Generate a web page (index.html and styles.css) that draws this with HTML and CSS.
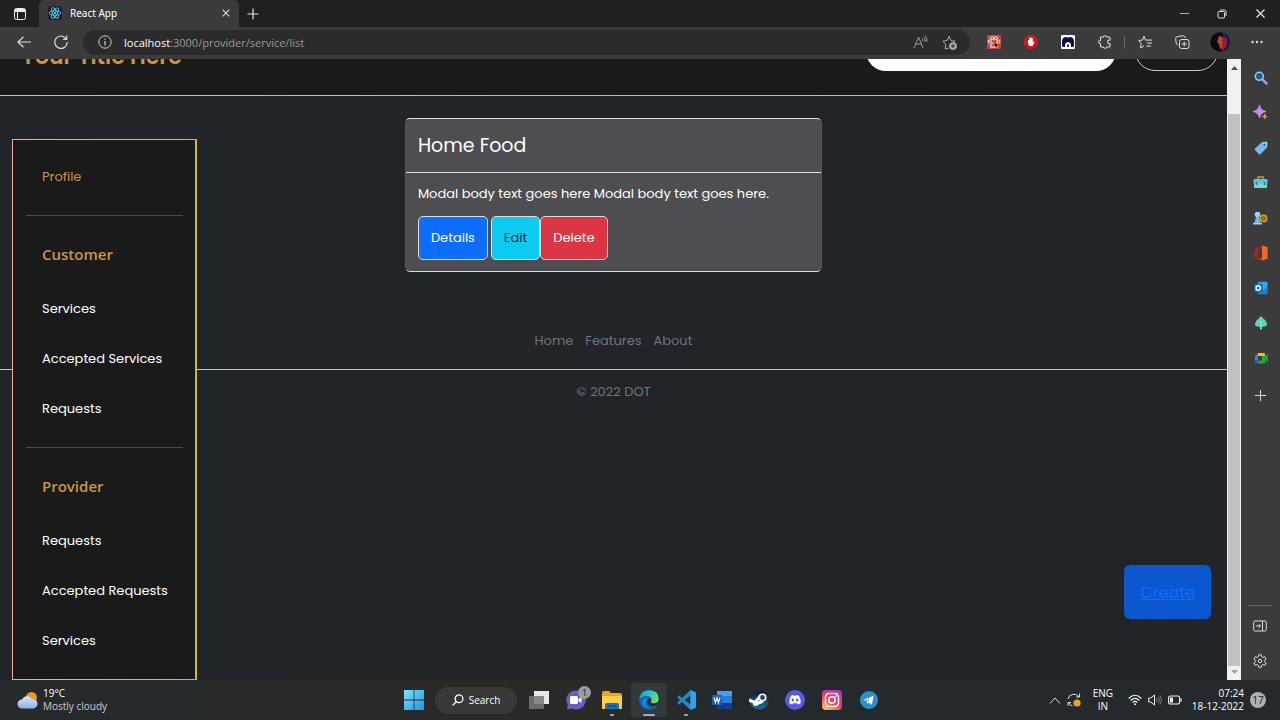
FILE: index.html
```html
<!DOCTYPE html>
<html lang="en">
<head>
<meta charset="utf-8">
<title>React App</title>
<link rel="stylesheet" href="styles.css">
</head>
<body>
<div class="desktop">
  <div class="tabbar">
    <button class="tab-menu" aria-label="Tab actions"><svg width="14" height="14" viewBox="0 0 14 14" fill="none" stroke="#eee"><rect x="1.500" y="1.500" width="11" height="11" rx="2"/><path d="M2 3.500h10" stroke-width="3"/><path d="M4.500 5v7.500"/></svg></button>
    <div class="tab">
      <svg width="14" height="14" viewBox="0 0 14 14"><rect width="14" height="14" rx="2" fill="#20232a"/><g fill="none" stroke="#58c4dc" stroke-width=".9"><ellipse cx="7" cy="7" rx="5.800" ry="2.300"/><ellipse cx="7" cy="7" rx="5.800" ry="2.300" transform="rotate(60 7 7)"/><ellipse cx="7" cy="7" rx="5.800" ry="2.300" transform="rotate(120 7 7)"/></g><circle cx="7" cy="7" r="1.200" fill="#58c4dc"/></svg>
      <span class="tab-title">React App</span>
      <button class="tab-close" aria-label="Close tab"><svg width="8" height="8" viewBox="0 0 8 8"><path d="M.7.7l6.600 6.600M7.300.7L.7 7.300" stroke="#ddd" stroke-width="1.100"/></svg></button>
    </div>
    <button class="new-tab" aria-label="New tab"><svg width="12" height="12" viewBox="0 0 12 12"><path d="M6 .5v11M.5 6h11" stroke="#ddd" stroke-width="1.200"/></svg></button>
    <div class="window-controls">
      <button aria-label="Minimise"><svg width="9" height="9" viewBox="0 0 9 9"><path d="M0 4.500h9" stroke="#aaa"/></svg></button>
      <button aria-label="Restore"><svg width="10" height="10" viewBox="0 0 10 10" fill="none" stroke="#ddd"><rect x="1" y="2.500" width="6.500" height="6.500" rx="1"/><path d="M3 1h4.500A1.500 1.500 0 0 1 9 2.500V7"/></svg></button>
      <button aria-label="Close"><svg width="9" height="9" viewBox="0 0 9 9"><path d="M.5.5l8 8M8.500.5l-8 8" stroke="#eee" stroke-width="1.100"/></svg></button>
    </div>
  </div>

  <div class="toolbar">
    <button class="tool" aria-label="Back"><svg width="14" height="12" viewBox="0 0 14 12" fill="none" stroke="#ddd" stroke-width="1.200"><path d="M6.500.7L1 6l5.500 5.300M1 6h13"/></svg></button>
    <button class="tool" aria-label="Refresh"><svg width="14" height="14" viewBox="0 0 14 14" fill="none" stroke="#ddd" stroke-width="1.200"><path d="M12.300 4A6.200 6.200 0 1 0 13.200 7M12.700.5V4.300H9"/></svg></button>
    <div class="address">
      <svg width="14" height="14" viewBox="0 0 14 14" fill="none" stroke="#ccc"><circle cx="7" cy="7" r="6.200"/><path d="M7 6v4.500M7 3.500v1.300" stroke-width="1.200"/></svg>
      <div class="url"><span class="host">localhost</span>:3000/provider/service/list</div>
      <button class="mini" aria-label="Read aloud"><svg width="15" height="14" viewBox="0 0 15 14" fill="none" stroke="#999"><path d="M1 13L5.500 2 10 13M2.600 9h5.800M9 3.500q1 1 .8 3M10.600 2q2.300 2 1.400 5M12 .7q2.800 2.300 1.800 6"/></svg></button>
      <button class="mini" aria-label="Add to favourites"><svg width="16" height="15" viewBox="0 0 16 15" fill="none" stroke="#aaa"><path d="M7 13l-3.800 1 .6-4.500L1 6.200l4.200-.8L7 1.300l1.900 4.100 4.200.8-1 1"/><circle cx="11" cy="11" r="3.500" fill="#aaa"/><path d="M11 9v4M9 11h4" stroke="#2b2b2b"/></svg></button>
    </div>
    <button class="tool ext" aria-label="Paw extension"><svg width="14" height="14" viewBox="0 0 14 14"><rect width="14" height="14" rx="1" fill="#c5493c"/><g fill="#c5493c" stroke="#f7d9d3" stroke-width="1.100"><circle cx="2.800" cy="6.500" r="1.500"/><circle cx="5.200" cy="3.200" r="1.500"/><circle cx="9" cy="3.200" r="1.500"/><circle cx="11.400" cy="6.500" r="1.500"/><path d="M3.500 11.500q0-2 2-3.200 1.500-1 3 0 2 1.200 2 3.200-1.500 1.500-3.500.3-2 1.200-3.500-.3z"/></g><path d="M7 7l4 3-2 3z" fill="#222"/></svg></button>
    <button class="tool ext" aria-label="Ad blocker"><svg width="14" height="14" viewBox="0 0 14 14"><path d="M4.200 0h5.600L14 4.200v5.600L9.800 14H4.200L0 9.800V4.200z" fill="#cc1620"/><path d="M4 7.500V5q.8-.8 1 .2V3.300q.6-.9 1.200 0V2.600q.7-.8 1.300 0v.7q.7-.8 1.200 0v4l1-.8q1-.2.600.8L8.500 11H5.500Q4 9.500 4 7.500z" fill="#fff"/></svg></button>
    <button class="tool ext" aria-label="Octotree extension"><svg width="14" height="14" viewBox="0 0 14 14"><rect width="14" height="14" rx="1" fill="#fff"/><path d="M1.500 12q-.8-2-.5-5Q1.200 2 5 2l1.300.6h1.400L9 2q3.800 0 4 5 .3 3-.5 5H10V9.500Q9.500 7 7 7T4 9.500V12z" fill="#0a1045"/><path d="M6.200 9.500h1.600V12H6.200z" fill="#0a1045"/></svg></button>
    <button class="tool ext" aria-label="Extensions"><svg width="14" height="14" viewBox="0 0 14 14" fill="none" stroke="#ddd" stroke-width="1.100"><path d="M3 2h2.300Q5.500.7 7 .7T8.700 2H11q1 0 1 1v2q-2.300-.3-2.300 1.800T12 8.800V11q0 1-1 1H8.700Q8.500 13.300 7 13.300T5.300 12H3.500q-1 0-1-1V8.700Q.7 8.500.7 7t1.800-1.700V3z"/></svg></button>
    <span class="tool-divider"></span>
    <button class="tool ext" aria-label="Favourites"><svg width="15" height="14" viewBox="0 0 15 14" fill="none" stroke="#ddd"><path d="M6 10.800L2.500 13l.8-4.300L.8 5.500l3.700-.4L6 1.200l1.500 3.900H14M9 8h5M8.500 11H13"/></svg></button>
    <button class="tool ext" aria-label="Collections"><svg width="15" height="14" viewBox="0 0 15 14" fill="none" stroke="#ddd"><rect x="4.500" y="4.500" width="9.500" height="9" rx="2"/><path d="M9.200 6.500v5M6.700 9h5M3 10.500Q1 9 1 7L.7 3.500q0-1.500 1.500-1.800l6-1Q10 .7 10.300 3"/></svg></button>
    <button class="tool ext" aria-label="Profile"><svg width="20" height="20" viewBox="0 0 20 20"><defs><clipPath id="face"><circle cx="10" cy="10" r="9.700"/></clipPath></defs><g clip-path="url(#face)"><rect width="20" height="20" fill="#080a12"/><path d="M13 1q6 3 6 12l-6 6z" fill="#26246a"/><path d="M9 4q5 0 5 6t-4 7l-1-5-2-2z" fill="#b44a2c"/><path d="M12 8l4-2q2 5-1 10l-3 3z" fill="#a01c28"/></g></svg></button>
    <button class="tool ext" aria-label="Settings and more"><svg width="12" height="4" viewBox="0 0 12 4" fill="#ddd"><circle cx="1.500" cy="2" r="1.200"/><circle cx="6" cy="2" r="1.200"/><circle cx="10.500" cy="2" r="1.200"/></svg></button>
  </div>

  <div class="browser-body">
    <div class="page">
      <header class="site-header">
        <a class="brand" href="#">Your Title Here</a>
        <input class="search" type="search" aria-label="Search">
        <button class="login" aria-label="Login"></button>
      </header>
      <nav class="side" aria-label="Sections">
        <a class="profile" href="#">Profile</a>
        <hr>
        <h2>Customer</h2>
        <a href="#">Services</a>
        <a href="#">Accepted Services</a>
        <a href="#">Requests</a>
        <hr>
        <h2>Provider</h2>
        <a href="#">Requests</a>
        <a href="#">Accepted Requests</a>
        <a href="#">Services</a>
      </nav>
      <main class="content">
        <article class="card">
          <h1>Home Food</h1>
          <div class="card-body">
            <p>Modal body text goes here Modal body text goes here.</p>
            <div class="actions">
              <button class="btn details">Details</button>
              <div class="pair"><button class="btn edit">Edit</button><button class="btn delete">Delete</button></div>
            </div>
          </div>
        </article>
      </main>
      <footer class="site-footer">
        <nav class="foot-links"><a href="#">Home</a><a href="#">Features</a><a href="#">About</a></nav>
        <p>© 2022 DOT</p>
      </footer>
      <a class="create" href="#">Create</a>
    </div>
    <div class="scrollbar">
      <svg width="7" height="5" viewBox="0 0 7 5"><path d="M0 5l3.500-4L7 5z" fill="#505050"/></svg>
      <div class="track"><div class="thumb"></div></div>
      <svg width="7" height="5" viewBox="0 0 7 5"><path d="M0 0l3.500 4L7 0z" fill="#a0a0a0"/></svg>
    </div>
    <aside class="edge-bar">
      <button aria-label="Search"><svg width="14" height="14" viewBox="0 0 14 14"><path d="M8.500 8.500l4 4" stroke="#a98fe0" stroke-width="2.500" stroke-linecap="round"/><circle cx="5.300" cy="5.300" r="4" fill="#245a8c" stroke="#8fc7ff" stroke-width="1.600"/></svg></button>
      <button aria-label="Discover"><svg width="15" height="15" viewBox="0 0 15 15"><path d="M6.500 0Q7.500 5.500 13 6.500 7.500 7.500 6.500 13 5.500 7.500 0 6.500 5.500 5.500 6.500 0z" fill="#bd8cf0" stroke="#bd8cf0"/><path d="M11.700 9v5M9.200 11.500h5" stroke="#d9a53b" stroke-width="1.400"/></svg></button>
      <button aria-label="Shopping"><svg width="14" height="14" viewBox="0 0 14 14"><path d="M7.500 1.500L12 .8q1.200 0 1.300 1.200L13 6.500l-6.500 6.700q-.8.500-1.500 0L1 9q-.5-.8 0-1.500z" fill="#78b7f5"/><path d="M7.500 1.500L12 .8q1.200 0 1.300 1.200L13 6z" fill="#8de0dc"/><circle cx="10.500" cy="3.700" r="1.100" fill="#285a7a"/></svg></button>
      <button aria-label="Tools"><svg width="15" height="13" viewBox="0 0 15 13"><path d="M5 3V1h5v2" fill="none" stroke="#caa23a" stroke-width="1.400"/><rect x=".5" y="3" width="14" height="5" rx="1" fill="#68b9e8"/><path d="M1 7.500h13V11q0 1-1 1H2q-1 0-1-1z" fill="#6fd8c4"/><path d="M3.500 6v3M11.500 6v3" stroke="#1f7288" stroke-width="1.300"/></svg></button>
      <button aria-label="Games"><svg width="15" height="14" viewBox="0 0 15 14"><circle cx="4.500" cy="3.500" r="2.800" fill="#9ad4ff"/><path d="M3 6h3l1 4 1 3H.5L2 10z" fill="#78b7f5"/><circle cx="10.500" cy="7.500" r="4" fill="#d39b26"/><circle cx="10.500" cy="7.500" r="1.600" fill="none" stroke="#6a4813" stroke-width="1.100"/><path d="M0 12h9v1.500H0z" fill="#9ad4ff"/></svg></button>
      <button aria-label="Office"><svg width="14" height="16" viewBox="0 0 14 16"><path d="M8 .5l5.500 1.800v11.400L8 15.500l-6.500-3 6.500.8V3L4 4v7L.7 12.500v-8z" fill="#d63b18"/><path d="M8 .5l5.500 1.800v11.400L8 15.500z" fill="#f0682a"/><path d="M8 .5L.7 4v8.500L4 11V4l4-1z" fill="#b32020"/></svg></button>
      <button aria-label="Outlook"><svg width="14" height="14" viewBox="0 0 14 14"><rect x="4" y=".7" width="9.500" height="8" rx="1" fill="#36a7ea"/><path d="M4 6l4.700 3L13.500 6v6.500q0 .8-.8.8H4.800q-.8 0-.8-.8z" fill="#1c82d4"/><rect x="0" y="2.700" width="8.500" height="8.500" rx="1" fill="#0f6abf"/><circle cx="4.200" cy="7" r="2.200" fill="none" stroke="#fff" stroke-width="1.400"/></svg></button>
      <button aria-label="E-tree"><svg width="14" height="14" viewBox="0 0 14 14"><path d="M6 8h2v5.500H6z" fill="#a9b9c8"/><path d="M7 .5q2 0 2.500 2.500 2.500.5 2.500 3 1.700 1.500.8 3.300Q12 11 7 11T1.200 9.300Q.3 7.500 2 6q0-2.500 2.500-3Q5 .5 7 .5z" fill="#5fd0b5"/><path d="M7 5v5" stroke="#a9e8d6"/></svg></button>
      <button aria-label="Meet"><svg width="14" height="12" viewBox="0 0 14 12"><path d="M4 1h6q1 0 1 1v2H4z" fill="#fbbc04"/><path d="M4 1v3H1z" fill="#ea4335"/><path d="M1 4h3v4.500H1z" fill="#2684fc"/><path d="M1 8.500h3v3H2q-1 0-1-1z" fill="#1e5fd0"/><path d="M4 8.500h4V4h3v6.500q0 1-1 1H4zM11 4.500L13.700 2v8.500L11 8z" fill="#20a64a"/></svg></button>
      <button class="edge-add" aria-label="Add"><svg width="11" height="11" viewBox="0 0 11 11"><path d="M5.500 0v11M0 5.500h11" stroke="#ddd"/></svg></button>
      <div class="edge-bottom">
        <button aria-label="Hide sidebar"><svg width="14" height="12" viewBox="0 0 14 12" fill="none" stroke="#ddd"><rect x=".7" y="1" width="12.600" height="10" rx="1.500"/><path d="M9.500 1v10M3 6h4.500M5.700 4.200L7.500 6 5.700 7.800"/></svg></button>
        <button aria-label="Settings"><svg width="14" height="14" viewBox="0 0 14 14" fill="none" stroke="#ddd"><path d="M5.700.8h2.600l.4 1.900 1.200.7 1.900-.6 1.300 2.200-1.500 1.300v1.400l1.500 1.300-1.300 2.200-1.900-.6-1.200.7-.4 1.900H5.700l-.4-1.900-1.200-.7-1.900.6L.9 9l1.500-1.300V6.300L.9 5l1.300-2.200 1.900.6 1.200-.7z"/><circle cx="7" cy="7" r="1.700"/></svg></button>
      </div>
    </aside>
  </div>

  <div class="taskbar">
    <div class="weather">
      <svg width="21" height="18" viewBox="0 0 21 18"><defs><linearGradient id="cloud" x2="0" y2="1"><stop stop-color="#dbe6fa"/><stop offset="1" stop-color="#8fb0ea"/></linearGradient></defs><circle cx="14.500" cy="6.500" r="5.500" fill="#f0952c"/><path d="M5 17.500a4.500 4.500 0 0 1 0-9 5.500 5.500 0 0 1 10-.3 4.700 4.700 0 0 1 1.500 9.300z" fill="url(#cloud)"/></svg>
      <div><div>19°C</div><div class="muted">Mostly cloudy</div></div>
    </div>
    <div class="apps">
      <button class="start" aria-label="Start"><svg width="20" height="20" viewBox="0 0 20 20"><defs><linearGradient id="win" x2="1" y2="1"><stop stop-color="#7fe0ff"/><stop offset="1" stop-color="#1c96e4"/></linearGradient></defs><path d="M0 0h9.600v9.600H0zM10.400 0H20v9.600h-9.600zM0 10.400h9.600V20H0zM10.400 10.400H20V20h-9.600z" fill="url(#win)"/></svg></button>
      <button class="task-search"><svg width="12" height="12" viewBox="0 0 12 12" fill="none" stroke="#fff" stroke-width="1.300"><circle cx="7" cy="4.800" r="3.900"/><path d="M4.200 7.700L.7 11.300"/></svg>Search</button>
      <div class="pins">
        <button aria-label="Task view"><svg width="20" height="18" viewBox="0 0 20 18"><rect x="5" y="0" width="15" height="13" fill="#e8e8e8"/><rect x="0" y="5" width="15" height="13" fill="#777" fill-opacity=".85"/></svg></button>
        <button aria-label="Chat"><svg width="20" height="20" viewBox="0 0 20 20"><path d="M10 .5a9.500 9.500 0 1 1-4 18L.8 19.500l1-4.500A9.500 9.500 0 0 1 10 .5z" fill="#6660b8"/><rect x="4" y="6" width="8" height="8" rx="1.500" fill="#fff"/><path d="M12.500 9l3-2v6l-3-2z" fill="#fff"/></svg><span class="count">1</span></button>
        <button class="running" aria-label="Files"><svg width="20" height="18" viewBox="0 0 20 18"><path d="M0 2q0-2 2-2h5l2 2h9q2 0 2 2v13H0z" fill="#e5a51d"/><path d="M0 5h20v12q0 1-1 1H1q-1 0-1-1z" fill="#fbcf4b"/><path d="M3 18v-4q0-2 2-2h10q2 0 2 2v4z" fill="#1672b8"/><path d="M6 15h8" stroke="#0c4d83" stroke-width="1.500"/></svg></button>
        <button class="running active" aria-label="Edge"><svg width="20" height="20" viewBox="0 0 20 20"><defs><linearGradient id="edge1" x2="1" y2=".3"><stop stop-color="#1598e0"/><stop offset=".6" stop-color="#30c6c0"/><stop offset="1" stop-color="#70dc55"/></linearGradient></defs><circle cx="10" cy="10" r="9.800" fill="#0d66ba"/><path d="M.3 9.500Q1 .2 10 .2t9.700 8.300q0 5-5.200 5-3.800 0-2.500-2 1.400-2.200-.6-4.200Q9 5 5.500 6 1.500 7 .3 9.500z" fill="url(#edge1)"/><path d="M8 9q-4 7 3 9.500Q2 18 4 11q1-3 5-3.500z" fill="#1a8bdc"/><path d="M9 9q-2.500 4 1 6.500 4 2.400 8-.7l1-.8q1.300-2 1-4l-1 2q-2 1.500-4.500 1.500-3.800 0-2.500-2Q12.500 10 11.500 8z" fill="#252a2e"/></svg></button>
        <button class="running" aria-label="VS Code"><svg width="20" height="20" viewBox="0 0 20 20"><path d="M14.500 0L20 2.400v15.200L14.500 20 1 7.200 3 5.500l11.500 9V5.500L3 14.500 1 12.800z" fill="#2489ca"/><path d="M14.500 0L20 2.400v15.200L14.500 20z" fill="#2ba3ec"/></svg></button>
        <button aria-label="Word"><svg width="20" height="18" viewBox="0 0 20 18"><rect x="5" y="0" width="15" height="18" rx="1" fill="#2b7cd3"/><path d="M5 0h15v5H5z" fill="#41a5ee"/><path d="M5 12h15v5q0 1-1 1H6q-1 0-1-1z" fill="#103f91"/><rect y="4" width="10" height="10" rx="1" fill="#185abd"/><path d="M2 6.500l1.500 5L5 7l1.500 4.500 1.500-5" fill="none" stroke="#fff" stroke-width="1.200"/></svg></button>
        <button aria-label="Steam"><svg width="20" height="20" viewBox="0 0 20 20"><defs><linearGradient id="steam" x2="0" y2="1"><stop stop-color="#101b35"/><stop offset="1" stop-color="#1b6c9d"/></linearGradient></defs><circle cx="10" cy="10" r="9.500" fill="url(#steam)"/><path d="M0 10l6 2.500 5-6M7 14l7-3" fill="none" stroke="#fff" stroke-width="3"/><circle cx="6.500" cy="13.500" r="2.500" fill="#fff"/><circle cx="13.500" cy="7.500" r="3.200" fill="#26435f" stroke="#fff" stroke-width="1.600"/></svg></button>
        <button aria-label="Discord"><svg width="20" height="20" viewBox="0 0 20 20"><circle cx="10" cy="10" r="10" fill="#5559e3"/><path d="M6 5.700q1-.6 2.500-.7l.4.800h2.200l.4-.8q1.500.1 2.500.7 2 3.300 1.800 7.300-1.300 1.200-3 1.500l-.8-1.300H8l-.8 1.300q-1.700-.3-3-1.500Q4 9 6 5.700z" fill="#fff"/><ellipse cx="7.800" cy="10" rx="1.200" ry="1.400" fill="#5559e3"/><ellipse cx="12.200" cy="10" rx="1.200" ry="1.400" fill="#5559e3"/></svg></button>
        <button aria-label="Instagram"><svg width="20" height="20" viewBox="0 0 20 20"><defs><linearGradient id="insta" x1=".2" y1="1" x2=".8" y2="0"><stop stop-color="#fdc04f"/><stop offset=".45" stop-color="#ee3f62"/><stop offset="1" stop-color="#a436c0"/></linearGradient></defs><rect width="20" height="20" rx="4" fill="url(#insta)"/><g fill="none" stroke="#fff" stroke-width="1.500"><rect x="3.500" y="3.500" width="13" height="13" rx="3.500"/><circle cx="10" cy="10" r="3.200"/></g><circle cx="13.800" cy="6.200" r=".9" fill="#fff"/></svg></button>
        <button aria-label="Telegram"><svg width="18" height="18" viewBox="0 0 18 18"><circle cx="9" cy="9" r="9" fill="#2994cb"/><path d="M3.500 9l10-4.200-1.600 9-3.200-2.200-1.500 1.500-.3-2.800 4.500-4-5.500 3.500z" fill="#fff"/></svg></button>
      </div>
    </div>
    <div class="tray">
      <button aria-label="Hidden icons"><svg width="12" height="7" viewBox="0 0 12 7"><path d="M1 6.500L6 1l5 5.500" fill="none" stroke="#ddd"/></svg></button>
      <button aria-label="Updates"><svg width="14" height="14" viewBox="0 0 14 14"><path d="M1 6a6 6 0 0 1 11-2M12.500.5V4H9M5.500 13A6 6 0 0 1 1.500 9.500M1 13V9.500h3" fill="none" stroke="#ddd"/><circle cx="10" cy="10" r="3.600" fill="#f0a020"/></svg></button>
      <div class="lang">ENG<br>IN</div>
      <svg width="14" height="12" viewBox="0 0 14 12" fill="none" stroke="#eee" stroke-width="1.200"><path d="M.7 4.500q6.300-6.500 12.600 0M2.700 6.500q4.300-4.300 8.600 0M4.700 8.500q2.300-2.200 4.600 0"/><circle cx="7" cy="10.200" r="1" fill="#eee" stroke="none"/></svg>
      <svg width="14" height="12" viewBox="0 0 14 12" fill="none" stroke="#eee"><path d="M.7 4h2L6.500 1v10L2.700 8h-2z"/><path d="M8.500 4q1.300 2 0 4M10.300 2.700q2.300 3.300 0 6.600M12 1.500q3 4.500 0 9" stroke="#777"/></svg>
      <svg width="14" height="10" viewBox="0 0 14 10"><rect x=".6" y="1" width="11" height="8" rx="2" fill="none" stroke="#eee" stroke-width="1.100"/><rect x="2" y="2.500" width="3" height="5" fill="#eee"/><path d="M13 3.500v3" stroke="#eee" stroke-width="1.300"/></svg>
      <div class="clock">07:24<br>18-12-2022</div>
      <span class="notices">17</span>
    </div>
  </div>
</div>
</body>
</html>
```

FILE: styles.css
```css
* { box-sizing: border-box; }
body { margin: 0; background: #212429; font-family: "Open Sans", "Noto Sans", sans-serif; font-size: 11px; color: #fff; }
button { margin: 0; padding: 0; border: 0; background: none; color: inherit; font: inherit; display: flex; align-items: center; justify-content: center; }
a { color: inherit; text-decoration: none; }
svg { flex: none; display: block; }

.desktop { height: 100vh; display: flex; flex-direction: column; overflow: hidden; }

/* Browser chrome */
.tabbar { flex: none; height: 27px; display: flex; background: #202020; }
.tab-menu { width: 39px; }
.tab { width: 200px; padding: 0 8px 1px 9px; display: flex; align-items: center; gap: 8px; background: #3b3b3b; border-radius: 5px 5px 0 0; }
.tab-title { flex: 1; font-family: "Noto Sans", sans-serif; font-size: 10px; }
.tab-close { width: 10px; }
.new-tab { width: 28px; }
.window-controls { margin-left: auto; padding-right: 1px; display: flex; }
.window-controls button { width: 38px; }

.toolbar { flex: none; height: 32px; padding: 0 5px 2px; display: flex; align-items: center; background: #3b3b3b; }
.tool { width: 37px; height: 30px; }
.address { flex: 1; height: 25px; margin: 0 5px 0 4px; padding: 0 11px 0 15px; display: flex; align-items: center; gap: 12px; background: #2b2b2b; border-radius: 13px; }
.url { flex: 1; color: #999; }
.host { color: #fff; }
.mini { width: 18px; height: 24px; }
.tool-divider { width: 1px; height: 13px; margin: 0 2px 0 1px; background: #666; }

.browser-body { flex: 1; min-height: 0; display: flex; }

/* Web page */
.page { flex: 1; min-width: 0; position: relative; overflow: hidden; background: #212429; font-family: Poppins, Inter, sans-serif; font-size: 13px; line-height: 20px; }
.site-header { height: 37px; padding: 0 9px 24px 21px; display: flex; align-items: flex-end; overflow: hidden; background: #1a1a1a; border-bottom: 1px solid; border-image: linear-gradient(90deg, #e9b194, #e2bc55) 1; }
.brand { margin: 0 auto 4px 0; color: #cc9544; font-size: 22px; font-weight: 600; line-height: 20px; }
.search { width: 250px; height: 40px; border: 0; border-radius: 20px; background: #fff; }
.login { width: 83px; height: 40px; margin-left: 19px; border: 1px solid #ccc; border-radius: 20px; }

.side { position: absolute; top: 80px; left: 12px; width: 185px; padding: 13px 12px 13px 13px; display: flex; flex-direction: column; white-space: nowrap; background: #1a1a1a; border: solid; border-width: 1px 2px 1px 1px; border-image: linear-gradient(90deg, #f0ab9c, #d0b450) 1; }
.side a, .side h2 { padding: 15px 16px; line-height: 20px; }
.side .profile { color: #cc9544; padding-top: 14px; }
.side h2 { margin: 0; padding: 20px 16px; color: #cc9544; font-family: "Open Sans", sans-serif; font-size: 15px; font-weight: 600; }
.side hr { width: 100%; height: 1px; margin: 13px 0 8px; border: 0; background: #4c4c4c; }

.content { padding: 22px 0 0; }
.card { width: 34%; margin: 0 auto; background: #4e4d52; border: 1px solid #58575c; border-top-color: #ddd; border-bottom-color: #ddd; border-radius: 5px; }
.card h1 { margin: 0; padding: 14px 12px 13px; border-bottom: 1px solid #ddd; font-size: 19px; font-weight: 400; line-height: 26px; }
.card-body { padding: 11px 12px; }
.card p { margin: 0 0 12px; }
.actions, .pair { display: flex; }
.actions { gap: 3px; }
.btn { height: 44px; padding: 0 12px; border: 1px solid #ddd; border-radius: 5px; font-size: 13px; }
.details { background: #0d6efd; }
.edit { background: #0dcaf0; color: #142c35; }
.delete { background: #dc3545; }

.site-footer { padding-top: 59px; color: #6c757d; text-align: center; }
.foot-links { padding-bottom: 18px; display: flex; justify-content: center; gap: 12px; border-bottom: 1px solid #c4c6c9; }
.site-footer p { margin: 12px 0 0; }
.create { position: absolute; right: 16px; bottom: 61px; padding: 15px 16px 13px; border-radius: 6px; background: #0b57d0; color: #0d6efd; font-size: 16px; line-height: 26px; text-decoration: underline; }

.scrollbar { width: 14px; padding: 6px 0 5px; display: flex; flex-direction: column; align-items: center; background: #f1f1f1; }
.track { flex: 1; width: 12px; margin: 4px 0; padding-top: 40px; }
.thumb { height: 100%; background: #c1c1c1; }

.edge-bar { width: 39px; padding-top: 1px; display: flex; flex-direction: column; background: #3b3b3b; }
.edge-bar button { width: 100%; height: 35px; }
.edge-bar .edge-add { margin-top: 3px; }
.edge-bottom { margin: auto 8px 2px 7px; padding-top: 2px; border-top: 1px solid #666; }

/* Taskbar */
.taskbar { flex: none; height: 40px; display: grid; grid-template-columns: 1fr auto 1fr; align-items: center; background: linear-gradient(90deg, #252a2d, #292928 35%, #292928 45%, #24292d 60%); font-size: 10px; line-height: 13px; }
.weather { padding-left: 17px; display: flex; align-items: center; gap: 5px; }
.muted { color: #ccc; }
.apps { height: 40px; display: flex; align-items: center; }
.start { width: 42px; }
.task-search { width: 82px; height: 27px; gap: 5px; border-radius: 14px; background: #373837; }
.pins { width: 370px; height: 40px; padding-left: 4px; display: flex; }
.pins button { flex: 1; position: relative; }
.pins .running::after { content: ""; position: absolute; bottom: 4px; left: 50%; width: 4px; height: 2px; margin-left: -2px; border-radius: 1px; background: #aaa; }
.pins .active { height: 34px; margin-top: 3px; background: #33383b; border-radius: 4px; }
.pins .active::after { bottom: 1px; width: 12px; margin-left: -6px; }
.count { position: absolute; top: 6px; right: 3px; width: 13px; height: 13px; border-radius: 50%; background: #96a0a4; color: #111; font-size: 9px; }
.tray { padding-right: 14px; display: flex; align-items: center; justify-content: flex-end; gap: 6px; }
.lang { width: 32px; margin-right: 3px; text-align: center; }
.clock { margin-left: 4px; text-align: right; }
.notices { width: 16px; height: 16px; border-radius: 50%; background: #a9b3b6; color: #222; line-height: 16px; text-align: center; }
```
